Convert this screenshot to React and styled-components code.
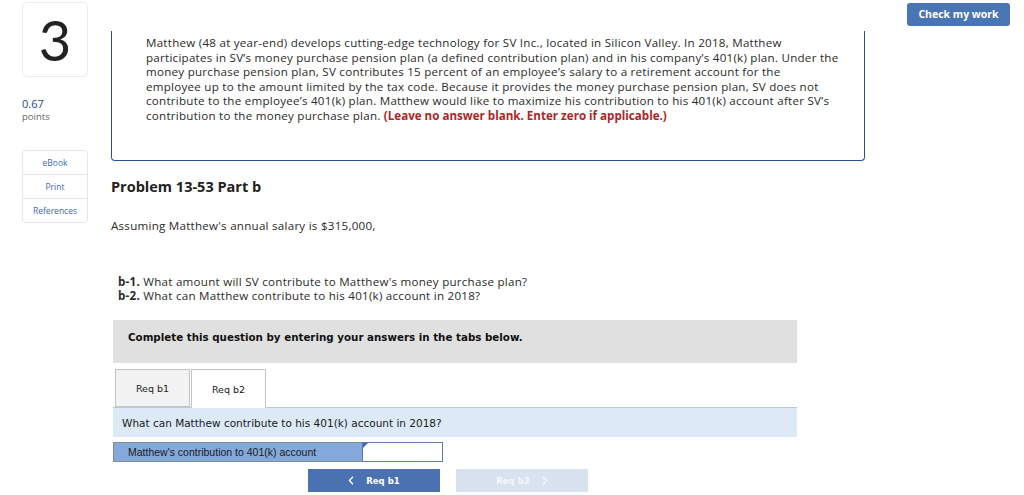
import React from 'react';
import styled, { createGlobalStyle } from 'styled-components';

const GlobalStyle = createGlobalStyle`
  html, body {
    margin: 0;
    padding: 0;
    background: #ffffff;
  }
  body {
    font-family: "Open Sans", Lato, sans-serif;
    color: #2b2b2b;
  }
`;

const Page = styled.div`
  display: flex;
  align-items: flex-start;
  padding-left: 22px;
  width: 1024px;
  height: 495px;
  box-sizing: border-box;
  overflow: hidden;
`;

const Sidebar = styled.aside`
  width: 66px;
  flex-shrink: 0;
  display: flex;
  flex-direction: column;
  padding-top: 2px;
`;

const NumberBox = styled.div`
  height: 75px;
  border: 1px solid #ececec;
  border-radius: 5px;
  box-sizing: border-box;
  display: flex;
  align-items: center;
  justify-content: center;
  font-family: Lato, sans-serif;
  font-weight: 400;
  font-size: 56px;
  color: #222;
`;

const Score = styled.div`
  margin-top: 20px;
  font-size: 11px;
  color: #274a87;
  line-height: 14px;
`;

const ScoreLabel = styled.div`
  font-size: 9.5px;
  color: #666;
  line-height: 12px;
`;

const ToolBox = styled.div`
  margin-top: 27px;
  border: 1px solid #e6e6e6;
  border-radius: 4px;
  display: flex;
  flex-direction: column;
`;

const ToolLink = styled.div`
  height: ${(p) => p.$h}px;
  display: flex;
  align-items: center;
  justify-content: center;
  font-size: 8.5px;
  color: #3b68b0;
  & + & {
    border-top: 1px solid #e6e6e6;
  }
`;

const Main = styled.main`
  width: 754px;
  margin-left: 23px;
  flex-shrink: 0;
  display: flex;
  flex-direction: column;
`;

const BodyText = styled.div`
  font-size: 11.6px;
  line-height: 14.6px;
  letter-spacing: 0.25px;
  color: #2b2b2b;
`;

const PromptBox = styled(BodyText)`
  margin-top: 31px;
  height: 130px;
  box-sizing: border-box;
  border: 1.5px solid #2b4f8e;
  border-top: none;
  border-radius: 0 0 4px 4px;
  padding: 5px 10px 0 34px;
  white-space: nowrap;
`;

const Alert = styled.span`
  color: #b02525;
  font-weight: 700;
  letter-spacing: 0;
`;

const Title = styled.h2`
  margin: 17px 0 0;
  font-size: 14.5px;
  font-weight: 700;
  line-height: 18px;
  color: #222;
`;

const Para = styled(BodyText)`
  margin-top: 23px;
`;

const Questions = styled(BodyText)`
  margin-top: 41px;
  padding-left: 7px;
  line-height: 14.8px;
`;

const Instruction = styled.div`
  margin: 16px 0 0 2px;
  width: 684px;
  height: 43px;
  box-sizing: border-box;
  background: #e0e0e0;
  padding: 11px 0 0 15px;
  font-family: "DejaVu Sans", Verdana, sans-serif;
  font-weight: 700;
  font-size: 10.3px;
  color: #111;
`;

const Tabs = styled.div`
  display: flex;
  margin: 6px 0 0 4px;
  gap: 1px;
`;

const Tab = styled.div`
  width: 75px;
  height: ${(p) => (p.$active ? 39 : 38)}px;
  box-sizing: border-box;
  border: 1px solid #c4c4c4;
  border-bottom: ${(p) => (p.$active ? 'none' : '1px solid #c4c4c4')};
  background: ${(p) => (p.$active ? '#ffffff' : '#f2f2f2')};
  display: flex;
  align-items: center;
  justify-content: center;
  font-family: "DejaVu Sans", Verdana, sans-serif;
  font-size: 9.5px;
  color: #222;
  position: relative;
  z-index: 1;
`;

const QuestionBar = styled.div`
  margin: -1px 0 0 2px;
  width: 684px;
  height: 30px;
  box-sizing: border-box;
  background: #dce9f6;
  border-top: 1px solid #b9c9da;
  display: flex;
  align-items: center;
  padding-left: 9px;
  font-family: "DejaVu Sans", Verdana, sans-serif;
  font-size: 10.5px;
  color: #1a1a1a;
`;

const AnswerRow = styled.div`
  display: flex;
  margin: 5px 0 0 2px;
  height: 20px;
`;

const AnswerLabel = styled.div`
  width: 249px;
  box-sizing: border-box;
  background: #84a9dc;
  border: 1px solid #8a8a8a;
  border-right: none;
  display: flex;
  align-items: center;
  padding-left: 14px;
  font-family: "Liberation Sans", Arial, sans-serif;
  font-size: 10.5px;
  color: #1a1a1a;
`;

const AnswerInput = styled.div`
  width: 81px;
  box-sizing: border-box;
  background: #fff;
  border: 1.5px solid #5a7bab;
  position: relative;
  &::before {
    content: '';
    position: absolute;
    left: 0;
    top: 0;
    border-top: 5px solid #3b6fc0;
    border-right: 5px solid transparent;
  }
`;

const NavRow = styled.div`
  display: flex;
  margin: 7px 0 0 197px;
  gap: 16px;
`;

const NavButton = styled.div`
  width: 132px;
  height: 23px;
  background: ${(p) => (p.$disabled ? '#d9e3ef' : '#4a72b0')};
  color: ${(p) => (p.$disabled ? '#f4f7fb' : '#ffffff')};
  display: flex;
  align-items: center;
  justify-content: center;
  gap: 12px;
  font-family: "DejaVu Sans", Verdana, sans-serif;
  font-weight: 700;
  font-size: 8.5px;
`;

const Chevron = styled.svg`
  width: 6px;
  height: 9px;
  display: block;
`;

const ChevronLeft = () => (
  <Chevron viewBox="0 0 6 9">
    <path d="M5 0.8 L1.4 4.5 L5 8.2" fill="none" stroke="currentColor" strokeWidth="1.3" />
  </Chevron>
);

const ChevronRight = () => (
  <Chevron viewBox="0 0 6 9">
    <path d="M1 0.8 L4.6 4.5 L1 8.2" fill="none" stroke="currentColor" strokeWidth="1.3" />
  </Chevron>
);

const Aside = styled.div`
  margin-left: 42px;
  padding-top: 1px;
`;

const CheckButton = styled.button`
  width: 103px;
  height: 23px;
  border: none;
  border-radius: 3px;
  background: #4a75b5;
  color: #fff;
  font-family: "Open Sans", sans-serif;
  font-weight: 700;
  font-size: 10.5px;
  padding: 0;
`;

export default function App() {
  return (
    <>
      <GlobalStyle />
      <Page>
        <Sidebar>
          <NumberBox>3</NumberBox>
          <Score>0.67</Score>
          <ScoreLabel>points</ScoreLabel>
          <ToolBox>
            <ToolLink $h={23}>eBook</ToolLink>
            <ToolLink $h={23}>Print</ToolLink>
            <ToolLink $h={23}>References</ToolLink>
          </ToolBox>
        </Sidebar>

        <Main>
          <PromptBox>
            Matthew (48 at year-end) develops cutting-edge technology for SV Inc., located in Silicon Valley. In 2018, Matthew<br />
            participates in SV’s money purchase pension plan (a defined contribution plan) and in his company’s 401(k) plan. Under the<br />
            money purchase pension plan, SV contributes 15 percent of an employee’s salary to a retirement account for the<br />
            employee up to the amount limited by the tax code. Because it provides the money purchase pension plan, SV does not<br />
            contribute to the employee’s 401(k) plan. Matthew would like to maximize his contribution to his 401(k) account after SV’s<br />
            contribution to the money purchase plan. <Alert>(Leave no answer blank. Enter zero if applicable.)</Alert>
          </PromptBox>

          <Title>Problem 13-53 Part b</Title>
          <Para>Assuming Matthew's annual salary is $315,000,</Para>

          <Questions>
            <b>b-1.</b> What amount will SV contribute to Matthew's money purchase plan?<br />
            <b>b-2.</b> What can Matthew contribute to his 401(k) account in 2018?
          </Questions>

          <Instruction>Complete this question by entering your answers in the tabs below.</Instruction>

          <Tabs>
            <Tab>Req b1</Tab>
            <Tab $active>Req b2</Tab>
          </Tabs>
          <QuestionBar>What can Matthew contribute to his 401(k) account in 2018?</QuestionBar>

          <AnswerRow>
            <AnswerLabel>Matthew's contribution to 401(k) account</AnswerLabel>
            <AnswerInput />
          </AnswerRow>

          <NavRow>
            <NavButton>
              <ChevronLeft />
              Req b1
            </NavButton>
            <NavButton $disabled>
              Req b2
              <ChevronRight />
            </NavButton>
          </NavRow>
        </Main>

        <Aside>
          <CheckButton>Check my work</CheckButton>
        </Aside>
      </Page>
    </>
  );
}
